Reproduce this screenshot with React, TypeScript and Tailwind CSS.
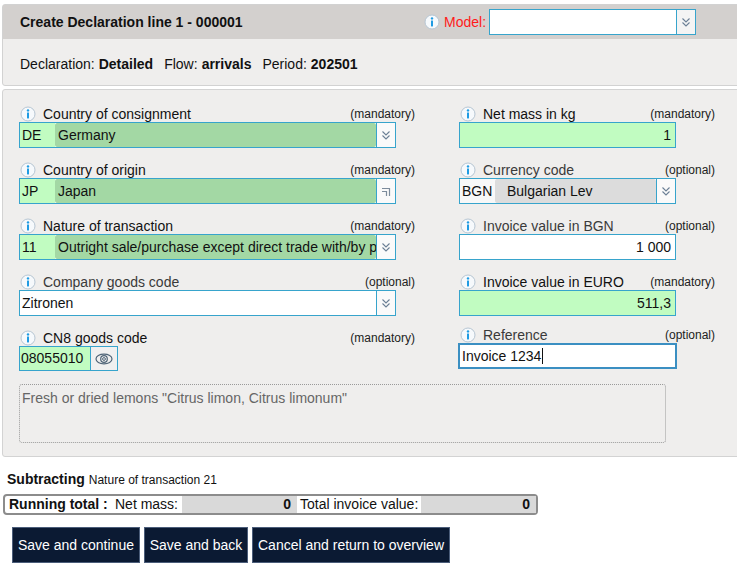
import React from "react";

function InfoIcon() {
  return (
    <svg width="16" height="16" viewBox="0 0 16 16" className="shrink-0">
      <circle cx="8" cy="8" r="7" fill="#f6f9fc" stroke="#b7c6d3" strokeWidth="1" />
      <circle cx="8" cy="4.4" r="1.2" fill="#1f9be3" />
      <rect x="7" y="6.4" width="2" height="6" rx="0.4" fill="#1f9be3" />
    </svg>
  );
}

function Chevrons() {
  return (
    <svg width="10" height="12" viewBox="0 0 10 12">
      <path d="M1.5 2.5 L5 6 L8.5 2.5" fill="none" stroke="#6b7f95" strokeWidth="1.1" />
      <path d="M1.5 6.5 L5 10 L8.5 6.5" fill="none" stroke="#6b7f95" strokeWidth="1.1" />
    </svg>
  );
}

function CornerIcon() {
  return (
    <svg width="12" height="12" viewBox="0 0 12 12">
      <path d="M2 3.5 H9.5 V11" fill="none" stroke="#7d8c9c" strokeWidth="1.2" />
      <path d="M2 6.5 H6.5 V11" fill="none" stroke="#7d8c9c" strokeWidth="1.2" />
    </svg>
  );
}

function EyeIcon() {
  return (
    <svg width="18" height="12" viewBox="0 0 18 12">
      <ellipse cx="9" cy="6" rx="8" ry="4.8" fill="none" stroke="#4f6477" strokeWidth="1.2" />
      <circle cx="9" cy="6" r="3.3" fill="none" stroke="#4f6477" strokeWidth="1.2" />
      <circle cx="9" cy="6" r="1.4" fill="none" stroke="#4f6477" strokeWidth="1" />
    </svg>
  );
}

function Label({ text, note, dim }: { text: string; note: string; dim?: boolean }) {
  return (
    <div className="flex items-end justify-between h-[20px]">
      <div className="flex items-center gap-[7px] pl-[1px]">
        <InfoIcon />
        <span className={`text-[14px] leading-[16px] ${dim ? "text-[#3a3a3a]" : "text-[#111]"}`}>{text}</span>
      </div>
      <span className="text-[12px] leading-[15px] text-[#222]">{note}</span>
    </div>
  );
}

function CodeSelect({
  code,
  name,
  codeBg,
  nameBg,
  codeW,
  icon,
  w,
}: {
  code: string;
  name: string;
  codeBg: string;
  nameBg: string;
  codeW: string;
  icon?: React.ReactNode;
  w: string;
}) {
  return (
    <div className={`${w} h-[26px] border border-[#37a4cc] bg-white flex text-[14px] text-[#111]`}>
      <span className={`${codeW} ${codeBg} pl-[2px] flex items-center shrink-0`}>{code}</span>
      <span className={`flex-1 min-w-0 ${nameBg} rounded-[2px] pl-[3px] flex items-center overflow-hidden whitespace-nowrap`}>
        {name}
      </span>
      <span className="w-[19px] border-l border-[#37a4cc] bg-[#fafafa] flex items-center justify-center shrink-0">
        {icon ?? <Chevrons />}
      </span>
    </div>
  );
}

function NumberBox({ value, green }: { value: string; green?: boolean }) {
  return (
    <div
      className={`w-[217px] h-[26px] border border-[#37a4cc] flex items-center justify-end pr-[4px] text-[14px] text-[#111] ${
        green ? "bg-[#c1fcc1]" : "bg-white"
      }`}
    >
      {value}
    </div>
  );
}

export default function App() {
  return (
    <div className="w-[737px] h-[566px] overflow-hidden bg-white font-['Liberation_Sans',Arial,sans-serif] text-[#111]">
      <div className="w-[780px] pt-[4px] pl-[2px]">
        {/* cabecera */}
        <div className="border border-[#d2d2d2] rounded-[3px] bg-[#efeeed]">
          <div className="h-[34px] bg-[#d3d0ce] flex items-center pl-[17px]">
            <span className="w-[404px] text-[14px] font-bold">Create Declaration line 1 - 000001</span>
            <InfoIcon />
            <span className="ml-[4px] text-[14px] text-[#ff1a1a]">Model:</span>
            <div className="ml-[3px] w-[207px] h-[26px] border border-[#37a4cc] bg-white flex justify-end">
              <span className="w-[19px] border-l border-[#37a4cc] bg-[#f4f4f4] flex items-center justify-center">
                <Chevrons />
              </span>
            </div>
          </div>
          <div className="h-[46px] flex items-center pl-[17px] pt-[5px] text-[14px]">
            <span>Declaration: </span>
            <span className="font-bold ml-[4px]">Detailed</span>
            <span className="ml-[11px]">Flow: </span>
            <span className="font-bold ml-[4px]">arrivals</span>
            <span className="ml-[11px]">Period: </span>
            <span className="font-bold ml-[4px]">202501</span>
          </div>
        </div>

        {/* formulario */}
        <div className="mt-[3px] border border-[#d3d3d3] rounded-[3px] bg-[#efeeed] pt-[12px] pl-[16px] pb-[13px]">
          <div className="flex gap-[44px]">
            <div className="w-[396px] flex flex-col gap-[10px]">
              <div>
                <Label text="Country of consignment" note="(mandatory)" />
                <CodeSelect w="w-[377px]" code="DE" name="Germany" codeW="w-[35px]" codeBg="bg-[#c1fcc1]" nameBg="bg-[#a3d8a4]" />
              </div>
              <div>
                <Label text="Country of origin" note="(mandatory)" />
                <CodeSelect
                  w="w-[377px]"
                  code="JP"
                  name="Japan"
                  codeW="w-[35px]"
                  codeBg="bg-[#c1fcc1]"
                  nameBg="bg-[#a3d8a4]"
                  icon={<CornerIcon />}
                />
              </div>
              <div>
                <Label text="Nature of transaction" note="(mandatory)" />
                <CodeSelect
                  w="w-[377px]"
                  code="11"
                  name="Outright sale/purchase except direct trade with/by private consumers"
                  codeW="w-[35px]"
                  codeBg="bg-[#c1fcc1]"
                  nameBg="bg-[#a3d8a4]"
                />
              </div>
              <div>
                <Label text="Company goods code" note="(optional)" dim />
                <div className="w-[377px] h-[26px] border border-[#37a4cc] bg-white flex text-[14px]">
                  <span className="flex-1 pl-[2px] flex items-center">Zitronen</span>
                  <span className="w-[19px] border-l border-[#37a4cc] bg-[#fafafa] flex items-center justify-center">
                    <Chevrons />
                  </span>
                </div>
              </div>
              <div>
                <Label text="CN8 goods code" note="(mandatory)" />
                <div className="flex h-[25px]">
                  <span className="w-[72px] border border-[#37a4cc] bg-[#c1fcc1] pl-[1px] flex items-center text-[14px]">
                    08055010
                  </span>
                  <span className="w-[27px] border border-l-0 border-[#37a4cc] bg-[#f0f0f0] flex items-center justify-center">
                    <EyeIcon />
                  </span>
                </div>
              </div>
            </div>

            <div className="w-[256px] flex flex-col gap-[10px]">
              <div>
                <Label text="Net mass in kg" note="(mandatory)" />
                <NumberBox value="1" green />
              </div>
              <div>
                <Label text="Currency code" note="(optional)" dim />
                <CodeSelect
                  w="w-[217px]"
                  code="BGN"
                  name="Bulgarian Lev"
                  codeW="w-[35px]"
                  codeBg="bg-[#f8f8f8]"
                  nameBg="bg-[#dcdcdc] pl-[12px]"
                />
              </div>
              <div>
                <Label text="Invoice value in BGN" note="(optional)" dim />
                <NumberBox value="1 000" />
              </div>
              <div>
                <Label text="Invoice value in EURO" note="(mandatory)" />
                <NumberBox value="511,3" green />
              </div>
              <div className="-mt-[3px]">
                <Label text="Reference" note="(optional)" dim />
                <div className="-ml-[1px] w-[219px] h-[26px] border-2 border-[#3b8fc2] bg-white flex items-center pl-[2px] text-[14px]">
                  Invoice 1234
                  <span className="inline-block h-[16px] border-l border-[#111] ml-[1px]" />
                </div>
              </div>
            </div>
          </div>

          <div className="mt-[13px] w-[647px] h-[59px] border border-dotted border-[#9a9a9a] rounded-[3px] px-[2px] pt-[3px] text-[14px] text-[#666]">
            Fresh or dried lemons "Citrus limon, Citrus limonum"
          </div>
        </div>

        {/* pie */}
        <div className="mt-[14px] pl-[5px] leading-[16px] text-[#111]">
          <span className="text-[14px] font-bold">Subtracting</span>
          <span className="text-[12px] ml-[4px]">Nature of transaction 21</span>
        </div>
        <div className="mt-[6px] ml-[1px] w-[535px] h-[21px] border-2 border-[#8c8c8c] rounded-[4px] bg-white flex text-[14px]">
          <span className="w-[110px] pl-[4px] font-bold flex items-center">Running total :</span>
          <span className="w-[67px] flex items-center">Net mass:</span>
          <span className="w-[115px] bg-[#d9d9d9] flex items-center justify-end pr-[6px] font-bold">0</span>
          <span className="w-[124px] pl-[3px] flex items-center">Total invoice value:</span>
          <span className="flex-1 bg-[#d9d9d9] flex items-center justify-end pr-[6px] font-bold">0</span>
        </div>
        <div className="mt-[12px] pl-[10px] flex gap-[4px]">
          <button className="w-[128px] h-[36px] bg-[#0b1a33] border border-[#4b5d7a] text-white text-[14px]">
            Save and continue
          </button>
          <button className="w-[104px] h-[36px] bg-[#0b1a33] border border-[#4b5d7a] text-white text-[14px]">
            Save and back
          </button>
          <button className="w-[198px] h-[36px] bg-[#0b1a33] border border-[#4b5d7a] text-white text-[14px]">
            Cancel and return to overview
          </button>
        </div>
      </div>
    </div>
  );
}
